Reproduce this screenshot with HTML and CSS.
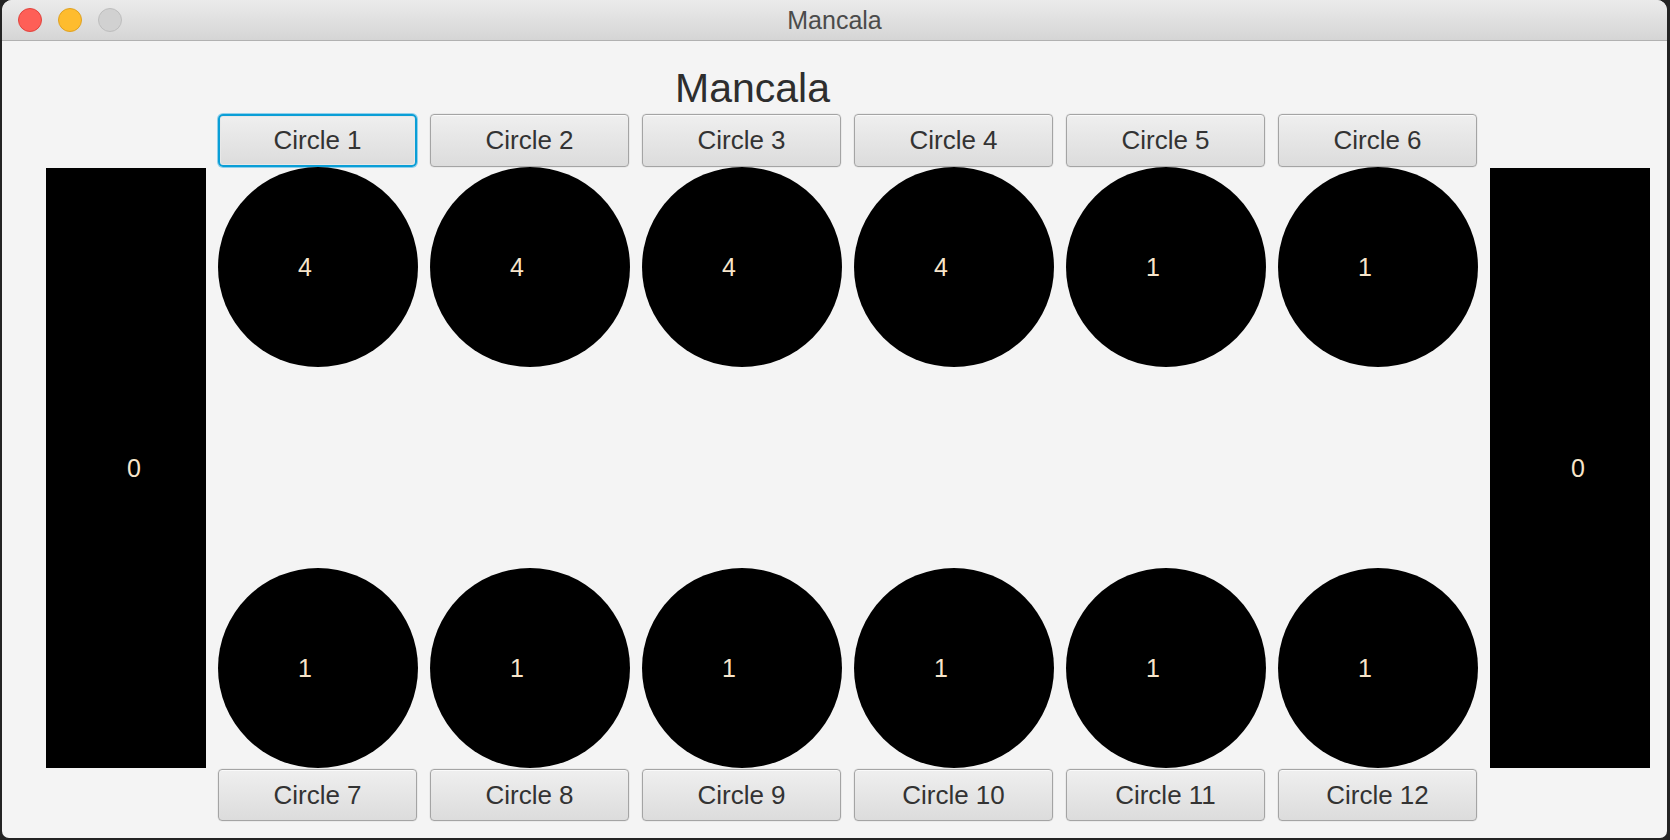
FILE: index.html
```html
<!DOCTYPE html>
<html>
<head>
<meta charset="utf-8">
<title>Mancala</title>
<link rel="stylesheet" href="styles.css">
</head>
<body>
<div class="window">
  <div class="titlebar">
    <div class="lights">
      <span class="light red"></span>
      <span class="light yellow"></span>
      <span class="light grey"></span>
    </div>
    <div class="wintitle">Mancala</div>
  </div>
  <div class="content">
    <div class="heading">Mancala</div>
    <div class="board">
      <button class="btn focused top c1">Circle 1</button>
      <button class="btn top c2">Circle 2</button>
      <button class="btn top c3">Circle 3</button>
      <button class="btn top c4">Circle 4</button>
      <button class="btn top c5">Circle 5</button>
      <button class="btn top c6">Circle 6</button>

      <div class="store left"><span>0</span></div>

      <div class="pit r1 c1"><span>4</span></div>
      <div class="pit r1 c2"><span>4</span></div>
      <div class="pit r1 c3"><span>4</span></div>
      <div class="pit r1 c4"><span>4</span></div>
      <div class="pit r1 c5"><span>1</span></div>
      <div class="pit r1 c6"><span>1</span></div>

      <div class="pit r2 c1"><span>1</span></div>
      <div class="pit r2 c2"><span>1</span></div>
      <div class="pit r2 c3"><span>1</span></div>
      <div class="pit r2 c4"><span>1</span></div>
      <div class="pit r2 c5"><span>1</span></div>
      <div class="pit r2 c6"><span>1</span></div>

      <div class="store right"><span>0</span></div>

      <button class="btn bottom c1">Circle 7</button>
      <button class="btn bottom c2">Circle 8</button>
      <button class="btn bottom c3">Circle 9</button>
      <button class="btn bottom c4">Circle 10</button>
      <button class="btn bottom c5">Circle 11</button>
      <button class="btn bottom c6">Circle 12</button>
    </div>
  </div>
</div>
</body>
</html>
```

FILE: styles.css
```css
html, body {
  margin: 0;
  padding: 0;
}
body {
  background: #232323;
  width: 1670px;
  height: 840px;
  overflow: hidden;
  font-family: "Liberation Sans", Arial, sans-serif;
}
.window {
  margin-left: 2px;
  width: 1665px;
  height: 838px;
  border-radius: 10px 10px 7px 7px;
  overflow: hidden;
  background: #f4f4f4;
  display: flex;
  flex-direction: column;
}
.titlebar {
  height: 40px;
  border-bottom: 1px solid #b1b1b1;
  background: linear-gradient(#ebebeb, #d5d5d5);
  display: flex;
  align-items: center;
  position: relative;
}
.lights {
  display: flex;
  gap: 16px;
  padding-left: 16px;
}
.light {
  width: 22px;
  height: 22px;
  border-radius: 50%;
  display: block;
}
.light.red { background: #fe5f57; border: 1px solid #e0443e; }
.light.yellow { background: #febc2e; border: 1px solid #dea123; }
.light.grey { background: #d1d1d1; border: 1px solid #bdbdbd; }
.wintitle {
  position: absolute;
  left: 0;
  right: 0;
  top: 0;
  line-height: 40px;
  text-align: center;
  font-size: 25px;
  color: #4b4b4b;
}
.content {
  flex: 1;
  padding: 24px 0 0 44px;
}
.heading {
  font-size: 41px;
  line-height: 46px;
  height: 46px;
  color: #2e2e2e;
  padding-left: 629px;
  margin-bottom: 3px;
}
.board {
  display: grid;
  grid-template-columns: 160px repeat(6, 200px) 160px;
  grid-template-rows: 53px 200px 201px 200px 53px;
  column-gap: 12px;
}
.c1 { grid-column: 2; }
.c2 { grid-column: 3; }
.c3 { grid-column: 4; }
.c4 { grid-column: 5; }
.c5 { grid-column: 6; }
.c6 { grid-column: 7; }
.btn.top { grid-row: 1; }
.pit.r1 { grid-row: 2; }
.pit.r2 { grid-row: 4; }
.btn.bottom { grid-row: 5; margin-top: 1px; height: 52px; }
.btn {
  width: 199px;
  height: 53px;
  box-sizing: border-box;
  margin: 0;
  padding: 0;
  border: 1px solid #a4a4a4;
  border-radius: 4px;
  background: linear-gradient(#efefef, #dcdcdc);
  box-shadow: inset 0 1px 0 #fafafa, 0 0 0 0.5px rgba(0,0,0,0.08);
  font-family: "Liberation Sans", Arial, sans-serif;
  font-size: 26px;
  color: #333333;
  text-align: center;
  outline: none;
}
.btn.focused {
  border: 2px solid #0a9ed6;
  box-shadow: 0 0 0 1px #8fd0ec, inset 0 0 0 1px #e8e8e8;
  border-radius: 5px;
}
.pit {
  width: 200px;
  height: 200px;
  border-radius: 50%;
  background: #000;
  display: flex;
  align-items: center;
  justify-content: center;
}
.pit span {
  width: 40px;
  text-align: left;
  font-size: 25px;
  color: #f7e5cb;
}
.store {
  grid-row: 2 / 5;
  margin-top: 1px;
  height: 600px;
  background: #000;
  display: flex;
  align-items: center;
  box-sizing: border-box;
  padding-left: 81px;
}
.store.left { grid-column: 1; }
.store.right { grid-column: 8; }
.store span {
  font-size: 25px;
  color: #f7e5cb;
}
```
